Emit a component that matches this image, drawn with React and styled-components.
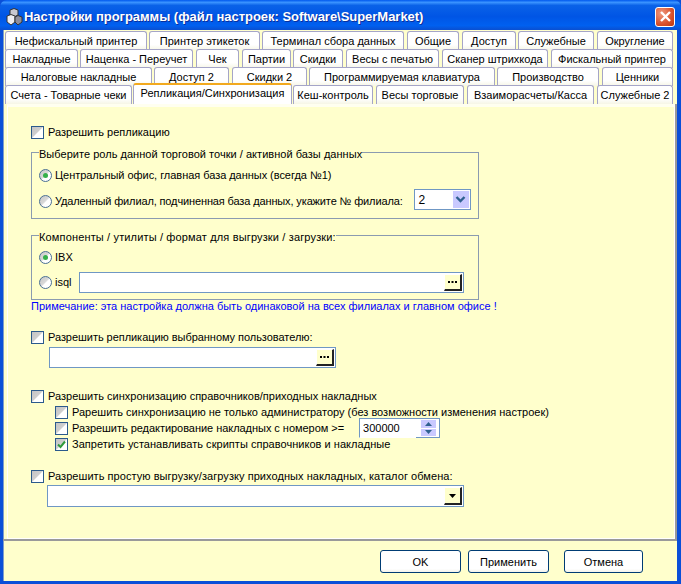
import styled, { createGlobalStyle } from "styled-components";

const GlobalStyle = createGlobalStyle`
  html, body {
    margin: 0;
    padding: 0;
    background: #0a4fd8;
  }
  * {
    box-sizing: border-box;
  }
`;

const FONT = `"Liberation Sans", Arial, sans-serif`;

const Window = styled.div`
  width: 681px;
  height: 584px;
  display: flex;
  flex-direction: column;
  overflow: hidden;
  font-family: ${FONT};
  font-size: 11px;
  color: #000;
  border-radius: 7px 7px 0 0;
  background: #0a4fd8;
`;

const TitleBar = styled.div`
  height: 30px;
  flex: none;
  display: flex;
  align-items: center;
  padding: 3px 6px 0 5px;
  background: linear-gradient(180deg, #0058ee 0%, #3a93ff 8%, #0a62e8 18%, #0055e5 55%, #0060f0 85%, #0a4fd0 100%);
`;

const TitleText = styled.div`
  flex: 1;
  margin-left: 1px;
  font-weight: 700;
  font-size: 13px;
  letter-spacing: -0.03px;
  color: #fff;
  text-shadow: 1px 1px 0 #0a2f9c;
  white-space: nowrap;
`;

const CloseButton = styled.div`
  width: 20px;
  height: 20px;
  border: 1px solid #fff;
  border-radius: 3px;
  display: flex;
  align-items: center;
  justify-content: center;
  background: radial-gradient(circle at 30% 30%, #ef9a80, #d9512c 60%, #b8360f);
`;

const Client = styled.div`
  flex: 1;
  margin: 0 4px 3px 3px;
  display: flex;
  flex-direction: column;
  background: #ffffcc;
  border-left: 1px solid #7f9dc9;
`;

const Tabs = styled.div`
  flex: none;
  padding: 2px 0 0 1px;
  display: flex;
  flex-direction: column;
`;

const TabRow = styled.div`
  height: 18px;
  display: flex;
  gap: 2px;
  align-items: flex-end;
`;

const Tab = styled.div`
  width: ${(p) => p.$w}px;
  margin-right: ${(p) => p.$after || 0}px;
  height: ${(p) => (p.$active ? 21 : 19)}px;
  padding-bottom: ${(p) => (p.$active ? 3 : 0)}px;
  flex: none;
  display: flex;
  align-items: center;
  justify-content: center;
  white-space: nowrap;
  border: 1px solid #a5a5c8;
  border-bottom: none;
  border-radius: 3px 3px 0 0;
  background: ${(p) => (p.$active ? "#fff" : "linear-gradient(180deg, #fff 0%, #fff 70%, #f6f6e6 100%)")};
  border-top: ${(p) => (p.$active ? "2px solid #f2a91e" : "1px solid #a5a5c8")};
  position: relative;
  z-index: ${(p) => (p.$active ? 2 : 1)};
`;

const Page = styled.div`
  flex: 1;
  margin: 0 2px 0 3px;
  padding: 17px 0 0 23px;
  background: #ffffcc;
  border-top: 3px solid #fffff0;
  border-left: 1px solid #fff;
  border-bottom: 1px solid #fff;
  border-right: 1px solid #fff;
  box-shadow: 2px 0 0 #9a9a9a;
  display: flex;
  flex-direction: column;
`;

const Row = styled.div`
  display: flex;
  align-items: center;
  height: ${(p) => p.$h || 16}px;
  margin-top: ${(p) => p.$top || 0}px;
  margin-left: ${(p) => p.$left || 0}px;
  white-space: nowrap;
`;

const Label = styled.span`
  letter-spacing: ${(p) => p.$track || 0}px;
`;

const CheckBox = styled.span`
  width: 13px;
  height: 13px;
  flex: none;
  margin-right: 4px;
  border: 1px solid #2b5a8c;
  background: linear-gradient(135deg, #c4c4c4 0%, #cfcfcf 48%, #fff 52%, #fff 100%);
  display: flex;
  align-items: center;
  justify-content: center;
`;

const Radio = styled.span`
  width: 13px;
  height: 13px;
  flex: none;
  margin-right: 3px;
  border: 1px solid #4a6f94;
  border-radius: 50%;
  background: linear-gradient(135deg, #c8c8c8 0%, #d8d8d8 45%, #fff 55%, #fff 100%);
  display: flex;
  align-items: center;
  justify-content: center;
  &::after {
    content: "";
    display: ${(p) => (p.$on ? "block" : "none")};
    width: 5px;
    height: 5px;
    border-radius: 50%;
    background: #35b04a;
  }
`;

const Group = styled.fieldset`
  width: 448px;
  height: ${(p) => p.$h}px;
  margin: ${(p) => p.$top}px 0 0 0;
  padding: 0 0 0 7px;
  border: 1px solid #8b9bb0;
  min-width: 0;
`;

const Legend = styled.legend`
  padding: 0;
  height: 13px;
  line-height: 16px;
  letter-spacing: ${(p) => p.$track || 0}px;
  white-space: nowrap;
  background: #ffffcc;
`;

const Field = styled.div`
  width: ${(p) => p.$w}px;
  height: ${(p) => p.$h || 21}px;
  flex: none;
  margin-left: ${(p) => p.$left || 0}px;
  border: 1px solid #6f97c4;
  background: #fff;
  display: flex;
  align-items: center;
  justify-content: flex-end;
  padding-right: 1px;
`;

const BrowseButton = styled.div`
  width: 18px;
  height: ${(p) => p.$h || 17}px;
  background: #ffffcc;
  border-right: 2px solid #222;
  border-bottom: 2px solid #222;
  border-top: 1px solid #fff;
  border-left: 1px solid #fff;
  display: flex;
  align-items: center;
  justify-content: center;
`;

const Combo = styled.div`
  width: 57px;
  height: 21px;
  margin: 0 0 3px ${(p) => p.$left}px;
  flex: none;
  border: 1px solid #6f97c4;
  background: #fff;
  display: flex;
  align-items: center;
  justify-content: space-between;
  padding: 1px 1px 1px 4px;
  font-size: 12px;
`;

const ComboArrow = styled.div`
  width: 16px;
  height: 100%;
  background: #c9c9ff;
  display: flex;
  align-items: center;
  justify-content: center;
`;

const Note = styled.div`
  color: #0000ff;
  height: 12px;
  line-height: 12px;
`;

const SpinField = styled.div`
  width: 81px;
  height: 20px;
  margin-left: ${(p) => p.$left}px;
  flex: none;
  position: relative;
  border: 1px solid #6f97c4;
  border-bottom-color: #fff;
  background: #fff;
  display: flex;
  align-items: center;
  justify-content: space-between;
  padding-left: 3px;
  &::after {
    content: "";
    position: absolute;
    right: -1px;
    bottom: -1px;
    width: 24px;
    height: 1px;
    background: #6f97c4;
  }
`;

const SpinButtons = styled.div`
  width: 15px;
  height: 100%;
  margin-right: 3px;
  display: flex;
  flex-direction: column;
  gap: 1px;
  padding: 1px 0;
`;

const SpinPart = styled.div`
  flex: 1;
  background: #c9c9ff;
  display: flex;
  align-items: center;
  justify-content: center;
`;

const Footer = styled.div`
  flex: none;
  height: 42px;
  margin-left: -1px;
  display: flex;
  align-items: flex-start;
  border-top: 2px solid #9a9a9a;
  padding: 9px 0 0 377px;
`;

const Button = styled.div`
  width: ${(p) => p.$w}px;
  height: 23px;
  margin-right: ${(p) => p.$after || 0}px;
  border: 1px solid #003c74;
  border-radius: 3px;
  background: linear-gradient(180deg, #fff 0%, #fff 85%, #f2f2ea 100%);
  display: flex;
  align-items: center;
  justify-content: center;
`;

const Triangle = ({ up, color = "#2f6190" }) => (
  <svg width="7" height="4" viewBox="0 0 7 4">
    <path d={up ? "M3.5 0L7 4H0z" : "M0 0H7L3.5 4z"} fill={color} />
  </svg>
);

const Dots = () => (
  <svg width="9" height="2" viewBox="0 0 9 2">
    <path d="M0 0h2v2H0zM3.500 0h2v2h-2zM7 0h2v2H7z" fill="#000" />
  </svg>
);

const tabRows = [
  [
    ["Нефискальный принтер", 142],
    ["Принтер этикеток", 111],
    ["Терминал сбора данных", 142, 1],
    ["Общие", 52, 1],
    ["Доступ", 54],
    ["Служебные", 76, 1],
    ["Округление", 76],
  ],
  [
    ["Накладные", 73],
    ["Наценка - Переучет", 113, 1],
    ["Чек", 43, 1],
    ["Партии", 49],
    ["Скидки", 50, 1],
    ["Весы с печатью", 93, 1],
    ["Сканер штрихкода", 106, 1],
    ["Фискальный принтер", 122],
  ],
  [
    ["Налоговые накладные", 147],
    ["Доступ 2", 75, 1],
    ["Скидки 2", 75],
    ["Программируемая клавиатура", 186],
    ["Производство", 102, 1],
    ["Ценники", 71],
  ],
  [
    ["Счета - Товарные чеки", 127, -1],
    ["Репликация/Синхронизация", 159, -1, true],
    ["Кеш-контроль", 80, 1],
    ["Весы торговые", 88, 1],
    ["Взаиморасчеты/Касса", 127, 1],
    ["Служебные 2", 76],
  ],
];

const App = () => {
  return (
    <>
      <GlobalStyle />
      <Window>
        <TitleBar>
          <svg width="18" height="18" viewBox="0 0 18 18">
            <path d="M5 2l4-1.500 4 1.500v5l-4 2-4-2z" fill="#c8c8d0" stroke="#333" />
            <path d="M2 8l4-1.500 4 1.500v6l-4 3-4-3z" fill="#eeeef2" stroke="#333" />
            <path d="M10 9l3-1.500 4 1.500v5l-4 3-3-3z" fill="#8e8e9c" stroke="#333" />
          </svg>
          <TitleText>Настройки программы (файл настроек: Software\SuperMarket)</TitleText>
          <CloseButton>
            <svg width="13" height="13" viewBox="0 0 13 13">
              <path d="M2 2l9 9M11 2l-9 9" stroke="#fff" strokeWidth="2.4" />
            </svg>
          </CloseButton>
        </TitleBar>
        <Client>
          <Tabs>
            {tabRows.map((row, i) => (
              <TabRow key={i}>
                {row.map(([label, w, after, active]) => (
                  <Tab key={label} $w={w} $after={after} $active={active}>
                    {label}
                  </Tab>
                ))}
              </TabRow>
            ))}
          </Tabs>
          <Page>
            <Row>
              <CheckBox />
              Разрешить репликацию
            </Row>
            <Group $h={73} $top={6}>
              <Legend $track={0.03}>Выберите роль данной торговой точки / активной базы данных</Legend>
              <Row $top={8}>
                <Radio $on />
                <Label $track={-0.04}>Центральный офис, главная база данных (всегда №1)</Label>
              </Row>
              <Row $top={10}>
                <Radio />
                <Label $track={-0.13}>Удаленный филиал, подчиненная база данных, укажите № филиала:</Label>
                <Combo $left={11}>
                  2
                  <ComboArrow>
                    <svg width="11" height="7" viewBox="0 0 11 7">
                      <path d="M1.500 1l4 4 4-4" fill="none" stroke="#2f6190" strokeWidth="2.400" />
                    </svg>
                  </ComboArrow>
                </Combo>
              </Row>
            </Group>
            <Group $h={71} $top={10}>
              <Legend $track={0.15}>Компоненты / утилиты / формат для выгрузки / загрузки:</Legend>
              <Row $top={7}>
                <Radio $on />
                IBX
              </Row>
              <Row $top={9}>
                <Radio />
                isql
                <Field $w={385} $left={7}>
                  <BrowseButton>
                    <Dots />
                  </BrowseButton>
                </Field>
              </Row>
            </Group>
            <Note>Примечание: эта настройка должна быть одинаковой на всех филиалах и главном офисе !</Note>
            <Row $top={17}>
              <CheckBox />
              <Label $track={-0.045}>Разрешить репликацию выбранному пользователю:</Label>
            </Row>
            <Row $h={21} $left={18} $top={2}>
              <Field $w={287}>
                <BrowseButton>
                  <Dots />
                </BrowseButton>
              </Field>
            </Row>
            <Row $top={20}>
              <CheckBox />
              Разрешить синхронизацию справочников/приходных накладных
            </Row>
            <Row $left={24}>
              <CheckBox />
              Рарешить синхронизацию не только администратору (без возможности изменения настроек)
            </Row>
            <Row $left={24}>
              <CheckBox />
              <Label $track={-0.04}>Разрешить редактирование накладных с номером &gt;=</Label>
              <SpinField $left={15}>
                300000
                <SpinButtons>
                  <SpinPart>
                    <Triangle up />
                  </SpinPart>
                  <SpinPart>
                    <Triangle />
                  </SpinPart>
                </SpinButtons>
              </SpinField>
            </Row>
            <Row $left={24}>
              <CheckBox>
                <svg width="11" height="11" viewBox="0 0 11 11">
                  <path d="M2 5.500l2.500 2.500L9 2.500" fill="none" stroke="#2f9a3a" strokeWidth="2" />
                </svg>
              </CheckBox>
              <Label $track={0.035}>Запретить устанавливать скрипты справочников и накладные</Label>
            </Row>
            <Row $top={16}>
              <CheckBox />
              <Label $track={0.055}>Разрешить простую выгрузку/загрузку приходных накладных, каталог обмена:</Label>
            </Row>
            <Row $h={22} $left={16} $top={1}>
              <Field $w={417} $h={22}>
                <BrowseButton $h={18}>
                  <Triangle color="#000" />
                </BrowseButton>
              </Field>
            </Row>
          </Page>
          <Footer>
            <Button $w={81} $after={7}>OK</Button>
            <Button $w={81} $after={15}>Применить</Button>
            <Button $w={79}>Отмена</Button>
          </Footer>
        </Client>
      </Window>
    </>
  );
};

export default App;
